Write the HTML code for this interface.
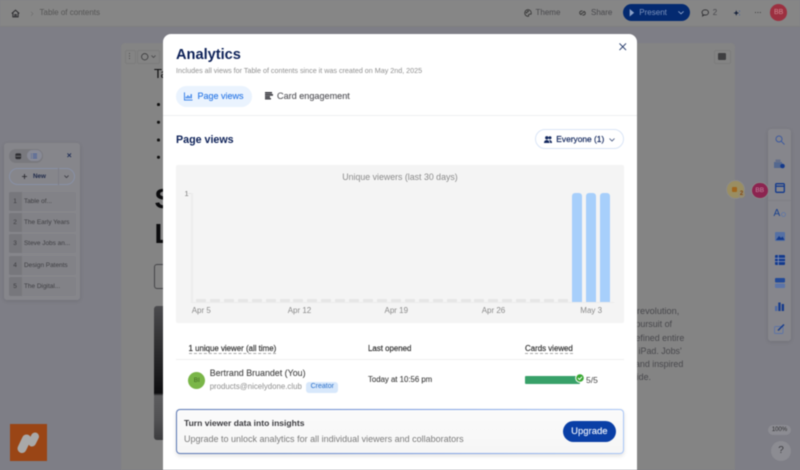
<!DOCTYPE html>
<html>
<head>
<meta charset="utf-8">
<style>
html,body{margin:0;padding:0;width:800px;height:470px;overflow:hidden;background:#7e7e86;font-family:"Liberation Sans",sans-serif}
#root{position:relative;width:800px;height:470px;overflow:hidden;filter:blur(.4px)}
#root div{position:absolute;white-space:nowrap}
.t{line-height:1}
svg{position:absolute;overflow:visible}
.row{left:4.300px;width:67.700px;height:19px;background:#828287;border-radius:2px}
.num{left:0;top:0;width:13px;height:19px;background:#77777c;color:#3c3c40;font-size:6.500px;line-height:19px;text-align:center;border-radius:2px 0 0 2px}
.lbl{left:15.400px;top:0;line-height:19px;font-size:6.450px;color:#3e3e42}
.ph{top:299px;width:10px;height:3px;background:#e6e6e6;border-radius:1px 1px 0 0}
.bar{top:193px;width:10px;height:109px;background:#a7cffb;border-radius:3px 3px 0 0}
.ax{color:#8a8a8a;font-size:8px;line-height:1;top:307px}
.dl{color:#48484c;font-size:8.900px;line-height:1}
</style>
</head>
<body>
<div id="root">
<!-- header -->
<div style="left:0;top:0;width:800px;height:26px;background:#868686;border-bottom:.5px solid #808080"></div>
<svg style="left:10.800px;top:8.500px" width="9" height="9" viewBox="0 0 12 12" fill="none" stroke="#2a2a2e" stroke-width="1.300"><path d="M1 6 6 1.500 11 6M2.500 5v5.500h7V5M5 10.500V7.500h2v3"/></svg>
<svg style="left:30px;top:10.500px" width="4" height="5.500" viewBox="0 0 6 8" fill="none" stroke="#707070" stroke-width="1"><path d="M1.500 1 4.500 4 1.500 7"/></svg>
<div class="t" style="left:39.500px;top:9px;font-size:8px;color:#555">Table of contents</div>

<svg style="left:523.500px;top:8.700px" width="8" height="8" viewBox="0 0 11 11" fill="none" stroke="#333" stroke-width="1.200"><path d="M5.500 1a4.500 4.500 0 1 0 0 9c1.200 0 1-1 .8-1.600-.2-.8.400-1.200 1.200-1.200h1.300c.8 0 1.200-.6 1.200-1.400C10 2.700 8 1 5.500 1z"/><circle cx="3.500" cy="5" r=".6"/><circle cx="5.500" cy="3.300" r=".6"/></svg>
<div class="t" style="left:535.500px;top:9px;font-size:8px;color:#48484c">Theme</div>
<svg style="left:577.700px;top:8.700px" width="9" height="8" viewBox="0 0 12 11" fill="none" stroke="#333" stroke-width="1.200"><path d="M5 7.500H3.500a2.500 2.500 0 0 1 0-4.500L6 2.500M7 3.500h1.500a2.500 2.500 0 0 1 0 4.500L6 8.500M4 6.500 8 4.500"/></svg>
<div class="t" style="left:591px;top:9px;font-size:8px;color:#48484c">Share</div>
<div style="left:622.700px;top:4px;width:67.500px;height:17.300px;border-radius:9px;background:#042a70"></div>
<svg style="left:629.300px;top:8.700px" width="5.500" height="7.500" viewBox="0 0 8 8" preserveAspectRatio="none"><path d="M1 0 7.500 4 1 8z" fill="#8da3c9"/></svg>
<div class="t" style="left:639.300px;top:9px;font-size:8px;color:#7d93bd">Present</div>
<svg style="left:678.300px;top:11.300px" width="6" height="3.500" viewBox="0 0 8 5" preserveAspectRatio="none" fill="none" stroke="#9cb0d2" stroke-width="1.100"><path d="M.5.500 4 4 7.500.5"/></svg>
<svg style="left:701px;top:8.800px" width="8.500" height="8" viewBox="0 0 10 10" fill="none" stroke="#2a2a2e" stroke-width="1.100"><path d="M5 1c2.400 0 4 1.500 4 3.300S7.400 7.600 5 7.600c-.5 0-1 0-1.400-.2L1.700 8.700l.3-2C1.300 6 1 5.200 1 4.300 1 2.500 2.600 1 5 1z"/></svg>
<div class="t" style="left:712.700px;top:9px;font-size:8px;color:#48484c">2</div>
<svg style="left:732.700px;top:8.800px" width="8" height="8" viewBox="0 0 11 11"><path d="M4.500 1.500 5.600 4.400 8.500 5.500 5.600 6.600 4.500 9.500 3.400 6.600.5 5.500 3.400 4.400z" fill="#14203a"/><circle cx="9" cy="3" r=".8" fill="#3a5a9a"/><circle cx="9" cy="8" r=".7" fill="#3a5a9a"/></svg>
<div style="left:754.500px;top:11.800px;width:1.500px;height:1.500px;border-radius:50%;background:#2a2a2e;box-shadow:2.400px 0 #2a2a2e,4.800px 0 #2a2a2e"></div>
<div class="t" style="left:770px;top:4.300px;width:17.300px;height:17px;border-radius:50%;background:#9c3040;color:#d08a92;font-size:7px;line-height:17px;text-align:center">BB</div>

<!-- doc card -->
<div style="left:121px;top:43px;width:614px;height:427px;background:#848484;border-radius:4px 4px 0 0"></div>
<div style="left:125px;top:50px;width:9px;height:12px;border:.5px solid #7c7c7c;border-radius:2px"></div>
<div style="left:129.200px;top:53px;width:1.200px;height:1.200px;border-radius:50%;background:#3e3e40;box-shadow:0 2.500px #3e3e40,0 5px #3e3e40"></div>
<div style="left:137.300px;top:50px;width:20.500px;height:12px;border:.5px solid #7c7c7c;border-radius:2px"></div>
<svg style="left:140.500px;top:52.500px" width="7.500" height="7.500" viewBox="0 0 8 8" fill="none" stroke="#3a3a3c" stroke-width=".9"><circle cx="4" cy="4" r="3.400"/></svg>
<svg style="left:151px;top:55px" width="5" height="3" viewBox="0 0 5 3" fill="none" stroke="#3a3a3c" stroke-width=".7"><path d="M.5.500 2.500 2.500 4.500.5"/></svg>
<div class="t" style="left:154px;top:67px;font-size:13px;color:#0e0e10">Ta</div>
<div style="left:157px;top:103px;width:2.600px;height:2.600px;border-radius:50%;background:#111;box-shadow:0 17.700px #111,0 35.500px #111,0 52.700px #111"></div>
<div class="t" style="left:154.500px;top:184.500px;font-size:28px;font-weight:bold;color:#0c0c0e">S</div>
<div class="t" style="left:154.500px;top:220.300px;font-size:28px;font-weight:bold;color:#0c0c0e">L</div>
<div style="left:154px;top:264px;width:20px;height:23px;border:.7px solid #454548;border-radius:3px"></div>
<div style="left:154px;top:306px;width:20px;height:134px;border-radius:3px;background:linear-gradient(180deg,#4b4b4e 0,#333335 25%,#1d1d1f 50%,#0d0d0f 65%,#5c5c5e 67%,#515153 85%,#3c3c3e 100%)"></div>
<div style="left:714px;top:50px;width:15px;height:12px;border:.5px solid #7c7c7c;border-radius:2px"></div>
<div style="left:718.300px;top:52.700px;width:7.300px;height:7px;background:#3e3e40;border-radius:1px"></div>
<div class="dl" style="right:120.700px;top:307px;font-size:9.200px">revolution,</div>
<div class="dl" style="right:128px;top:320px">pursuit of</div>
<div class="dl" style="right:115.700px;top:333.500px">defined entire</div>
<div class="dl" style="right:118.300px;top:346.500px">and iPad. Jobs'</div>
<div class="dl" style="right:116.700px;top:359.700px">and inspired</div>
<div class="dl" style="right:149px;top:373px">wide.</div>

<!-- left panel -->
<div style="left:4.300px;top:143px;width:75.700px;height:157px;background:#86868b;border-radius:3px;box-shadow:0 1px 4px rgba(0,0,0,.12)">
  <div style="left:4.700px;top:6px;width:33.700px;height:13.700px;background:#79797e;border-radius:7px"></div>
  <svg style="left:10.700px;top:9.700px" width="6.500" height="6.500" viewBox="0 0 8 8"><rect x=".5" y=".5" width="7" height="7" rx="1.500" fill="#2f2f33"/><path d="M1 4h6" stroke="#8a8a8e" stroke-width=".8"/></svg>
  <div style="left:22.400px;top:7px;width:15px;height:11px;background:#888a96;border-radius:6px"></div>
  <svg style="left:26.400px;top:10px" width="6" height="6" viewBox="0 0 8 8" stroke="#2f4f9a" stroke-width="1"><path d="M2.500 1.500H8M2.500 4H8M2.500 6.500H8M0 1.500h1M0 4h1M0 6.500h1"/></svg>
  <svg style="left:62.400px;top:9.500px" width="4.500" height="4.500" viewBox="0 0 5 5" stroke="#1d2c55" stroke-width="1"><path d="M.5.500l4 4M4.500.500l-4 4"/></svg>
  <div style="left:5px;top:25.300px;width:65.400px;height:16.500px;box-sizing:border-box;border:.5px solid #8890a6;border-radius:8.500px"></div>
  <div style="left:53.700px;top:25.300px;width:.5px;height:16.500px;background:#7c7c84"></div>
  <svg style="left:18px;top:31px" width="5" height="5" viewBox="0 0 7 7" stroke="#24242a" stroke-width="1.100"><path d="M3.500 0v7M0 3.500h7"/></svg>
  <div class="t" style="left:28.700px;top:30.500px;font-size:6.300px;font-weight:bold;color:#1f2a4a">New</div>
  <svg style="left:59.700px;top:32px" width="5" height="3.500" viewBox="0 0 6 4" fill="none" stroke="#303038" stroke-width=".9"><path d="M.5.500 3 3 5.500.5"/></svg>
  <div class="row" style="top:49px"><div class="num">1</div><div class="lbl">Table of...</div></div>
  <div class="row" style="top:70.200px"><div class="num">2</div><div class="lbl">The Early Years</div></div>
  <div class="row" style="top:91.400px"><div class="num">3</div><div class="lbl">Steve Jobs an...</div></div>
  <div class="row" style="top:112.600px"><div class="num">4</div><div class="lbl">Design Patents</div></div>
  <div class="row" style="top:133.800px"><div class="num">5</div><div class="lbl">The Digital...</div></div>
</div>

<!-- logo -->
<div style="left:9.500px;top:423.500px;width:37px;height:37px;background:#9a4515"></div>
<svg style="left:17px;top:431px" width="23" height="23" viewBox="0 0 23 23" fill="none" stroke="#a9a9a9" stroke-linecap="round"><path d="M5 17.500 9.500 8" stroke-width="9"/><path d="M15 11.500 18 5.500" stroke-width="8"/></svg>

<!-- right toolbar -->
<div style="left:767.700px;top:129px;width:23.300px;height:211.700px;background:#86868c;border-radius:3px;box-shadow:0 1px 4px rgba(0,0,0,.12)"></div>
<div style="left:767.700px;top:200px;width:23.300px;height:.7px;background:#808086"></div>
<svg style="left:774.500px;top:135px" width="10" height="10" viewBox="0 0 10 10" fill="none" stroke="#3d5a9f" stroke-width="1"><circle cx="4" cy="4" r="3"/><path d="M6.300 6.300 9.500 9.500"/></svg>
<svg style="left:774px;top:159px" width="11" height="10" viewBox="0 0 11 10"><rect x="0" y="3" width="8" height="6" fill="#54688f"/><rect x="1.500" y="0.500" width="5" height="3" fill="#646f8a"/><circle cx="8.500" cy="7" r="2.300" fill="#143a8c"/></svg>
<svg style="left:774.500px;top:182.500px" width="10" height="10" viewBox="0 0 10 10" fill="none" stroke="#143a8c" stroke-width="1.300"><rect x=".7" y=".7" width="8.600" height="8.600" rx="1"/><path d="M.7 3.200H9.300"/></svg>
<div class="t" style="left:773.500px;top:209px;font-size:10px;color:#18408e">A</div>
<svg style="left:780.500px;top:210.500px" width="5" height="7" viewBox="0 0 5 7" fill="none" stroke="#5d76a8" stroke-width=".8"><circle cx="2.500" cy="3.500" r="2"/></svg>
<svg style="left:774.500px;top:232px" width="10" height="9" viewBox="0 0 10 9"><rect width="10" height="9" rx="1" fill="#5570a4"/><path d="M1 8 4 4 6 6 7.500 4.500 9.500 8z" fill="#143a8c"/></svg>
<svg style="left:774.500px;top:255px" width="10" height="10" viewBox="0 0 10 10"><rect width="10" height="10" rx="1" fill="#143a8c"/><path d="M0 3.300h10M0 6.600h10M3.300 0v10" stroke="#8a96b5" stroke-width=".8"/></svg>
<svg style="left:774.500px;top:278px" width="10" height="10" viewBox="0 0 10 10"><rect width="10" height="4.500" rx="1" fill="#234a98"/><rect y="5.500" width="10" height="4.500" rx="1" fill="#5c74a8"/></svg>
<svg style="left:775px;top:302px" width="9" height="9" viewBox="0 0 9 9"><rect y="4" width="2.300" height="5" fill="#4f6aa4"/><rect x="3.300" y="0.500" width="2.300" height="8.500" fill="#143a8c"/><rect x="6.700" y="2" width="2.300" height="7" fill="#143a8c"/></svg>
<svg style="left:774px;top:324px" width="11" height="10" viewBox="0 0 11 10" fill="none"><rect x=".5" y="2.500" width="8.500" height="7" rx="1" stroke="#5c74a8" stroke-width=".9"/><path d="M4 6.500 10 .5" stroke="#143a8c" stroke-width="1.400"/></svg>

<!-- avatars on right -->
<div style="left:726px;top:180px;width:19px;height:19px;border-radius:50%;background:#9a8e62;border:.6px solid #8a8a8b;box-sizing:border-box"></div>
<div style="left:731.500px;top:186.500px;width:5px;height:5px;background:#a0661e;border-radius:1px"></div>
<div style="left:738px;top:191px;width:7px;height:7px;border-radius:50%;background:#958c70;color:#84460e;font-size:6px;line-height:7px;font-weight:bold;text-align:center">2</div>
<div class="t" style="left:751px;top:181.500px;width:15.500px;height:15.500px;border-radius:50%;background:#8c2450;border:.5px solid #888;color:#c48aa2;font-size:6.500px;line-height:15.500px;text-align:center">BB</div>
<div class="t" style="left:768.300px;top:425px;width:22.400px;height:10px;border-radius:6px;background:#8c8c92;color:#2e2e30;font-size:6px;line-height:10px;text-align:center">100%</div>
<div class="t" style="left:771px;top:441px;width:20px;height:20px;border-radius:50%;background:#8c8c92;color:#3c3c40;font-size:10px;line-height:20px;text-align:center">?</div>

<!-- modal -->
<div style="left:163px;top:34px;width:474px;height:436px;background:#fff;border-radius:8px 8px 0 0"></div>
<div class="t" style="left:176px;top:48px;font-size:14.600px;font-weight:bold;color:#0d2158">Analytics</div>
<svg style="left:618.500px;top:43px" width="7.500" height="7.500" viewBox="0 0 8 8" stroke="#1f3567" stroke-width="1"><path d="M.5.500l7 7M7.500.5l-7 7"/></svg>
<div class="t" style="left:176px;top:68.200px;font-size:7.170px;color:#8f8f8f">Includes all views for Table of contents since it was created on May 2nd, 2025</div>

<div style="left:175.700px;top:85.700px;width:76px;height:21px;border-radius:11px;background:#eaf3fe"></div>
<svg style="left:184.300px;top:92px" width="9" height="8.500" viewBox="0 0 10 10" preserveAspectRatio="none" fill="none" stroke="#2b78e6" stroke-width="1"><path d="M.5.500v9h9"/><path d="M2.500 7.500V5.500M4.300 7.500V4M6.100 7.500V5M8 7.500V2.500" stroke-width="1.300"/></svg>
<div class="t" style="left:197.500px;top:91.500px;font-size:9px;color:#2b78e6;-webkit-text-stroke:.12px #2b78e6">Page views</div>
<svg style="left:265px;top:92.300px" width="8" height="7.500" viewBox="0 0 8 8" preserveAspectRatio="none"><rect width="7" height="1.800" fill="#3e3e44"/><rect y="2.200" width="8" height="1.800" fill="#3e3e44"/><rect y="4.400" width="5" height="1.800" fill="#3e3e44"/><rect y="6.500" width="6" height="1.500" fill="#3e3e44"/></svg>
<div class="t" style="left:277px;top:91.500px;font-size:9.100px;color:#55555a;-webkit-text-stroke:.12px #55555a">Card engagement</div>
<div style="left:163px;top:115px;width:474px;height:.7px;background:#eeeff2"></div>

<div class="t" style="left:176px;top:135px;font-size:10.700px;font-weight:bold;color:#0d2158">Page views</div>
<div style="left:535px;top:128.500px;width:89px;height:20.500px;box-sizing:border-box;border:.7px solid #dbe6f7;border-radius:11px"></div>
<svg style="left:544px;top:136px" width="8" height="7" viewBox="0 0 8 7"><circle cx="2.800" cy="1.800" r="1.700" fill="#14295f"/><circle cx="6" cy="1.800" r="1.500" fill="#14295f"/><path d="M0 7c0-4 5.500-4 5.500 0zM6 7h2c0-2.500-1.500-3-3-3 1 1 1 2 1 3z" fill="#14295f"/></svg>
<div class="t" style="left:556.300px;top:135px;font-size:8.400px;color:#14295f;-webkit-text-stroke:.2px #14295f">Everyone (1)</div>
<svg style="left:609px;top:137.500px" width="6" height="4" viewBox="0 0 6 4" fill="none" stroke="#3a4c78" stroke-width=".8"><path d="M.5.500 3 3 5.500.5"/></svg>

<!-- chart -->
<div style="left:176px;top:165px;width:448px;height:158px;background:#f4f4f4;border-radius:2px"></div>
<div class="t" style="left:176px;top:172.500px;width:448px;text-align:center;font-size:8.800px;color:#8a8a8a">Unique viewers (last 30 days)</div>
<div class="t" style="left:184.500px;top:189.500px;font-size:7.500px;color:#777">1</div>
<div style="left:191px;top:193px;width:2px;height:110px;background:#ececec"></div>
<div style="left:188px;top:193px;width:3px;height:.7px;background:#e4e4e4"></div>
<div style="left:191px;top:302px;width:423px;height:1px;background:#ececec"></div>

<div class="ph" style="left:196px"></div><div class="ph" style="left:209.900px"></div><div class="ph" style="left:223.800px"></div><div class="ph" style="left:237.800px"></div><div class="ph" style="left:251.700px"></div><div class="ph" style="left:265.600px"></div><div class="ph" style="left:279.500px"></div><div class="ph" style="left:293.400px"></div><div class="ph" style="left:307.400px"></div><div class="ph" style="left:321.300px"></div><div class="ph" style="left:335.200px"></div><div class="ph" style="left:349.100px"></div><div class="ph" style="left:363px"></div><div class="ph" style="left:377px"></div><div class="ph" style="left:390.900px"></div><div class="ph" style="left:404.800px"></div><div class="ph" style="left:418.700px"></div><div class="ph" style="left:432.600px"></div><div class="ph" style="left:446.600px"></div><div class="ph" style="left:460.500px"></div><div class="ph" style="left:474.400px"></div><div class="ph" style="left:488.300px"></div><div class="ph" style="left:502.200px"></div><div class="ph" style="left:516.200px"></div><div class="ph" style="left:530.100px"></div><div class="ph" style="left:544px"></div><div class="ph" style="left:558px"></div>
<div class="bar" style="left:572px"></div><div class="bar" style="left:586px"></div><div class="bar" style="left:600px"></div>

<div class="ax" style="left:191.700px">Apr 5</div>
<div class="ax" style="left:287.700px">Apr 12</div>
<div class="ax" style="left:384.500px">Apr 19</div>
<div class="ax" style="left:481.700px">Apr 26</div>
<div class="ax" style="left:580.300px">May 3</div>

<!-- table -->
<div class="t" style="left:188.500px;top:344.500px;font-size:7.900px;color:#333;-webkit-text-stroke:.18px #333;border-bottom:.7px dashed #aaa;padding-bottom:1px">1 unique viewer (all time)</div>
<div class="t" style="left:368px;top:344.500px;font-size:7.900px;color:#333;-webkit-text-stroke:.18px #333">Last opened</div>
<div class="t" style="left:525px;top:344.500px;font-size:7.900px;color:#333;-webkit-text-stroke:.18px #333;border-bottom:.7px dashed #aaa;padding-bottom:1px">Cards viewed</div>
<div style="left:176px;top:359px;width:448px;height:.7px;background:#f0f0f0"></div>
<div class="t" style="left:188.300px;top:371.500px;width:17px;height:17px;border-radius:50%;background:#7ab648;color:#3f6a22;font-size:6.500px;line-height:17px;text-align:center">BI</div>
<div class="t" style="left:209.700px;top:368.500px;font-size:8.900px;color:#444;-webkit-text-stroke:.1px #444">Bertrand Bruandet (You)</div>
<div class="t" style="left:209.700px;top:383px;font-size:7.850px;color:#8e8e8e">products@nicelydone.club</div>
<div class="t" style="left:306.300px;top:382.300px;width:32px;height:10.700px;border-radius:3px;background:#d8e8fb;color:#2a6fc9;font-size:7px;line-height:10.700px;text-align:center">Creator</div>
<div class="t" style="left:368px;top:376px;font-size:7.800px;color:#3c3c3c;-webkit-text-stroke:.1px #3c3c3c">Today at 10:56 pm</div>
<div style="left:524.700px;top:375.700px;width:55.300px;height:8.300px;background:#38a169;border-radius:1px"></div>
<svg style="left:575px;top:372.500px" width="10" height="10" viewBox="0 0 10 10"><circle cx="5" cy="5" r="4.800" fill="#fff"/><circle cx="5" cy="5" r="3.800" fill="#38a832"/><path d="M3 5 4.500 6.500 7 3.800" fill="none" stroke="#fff" stroke-width="1"/></svg>
<div class="t" style="left:586px;top:376px;font-size:8.500px;color:#444">5/5</div>

<!-- upgrade box -->
<div style="left:176px;top:409.300px;width:448px;height:44.700px;box-sizing:border-box;border:1px solid transparent;border-radius:4px;background:linear-gradient(#fbfbfb,#f6f6f6) padding-box,linear-gradient(90deg,#5a77b4 0,#7a9be0 50%,#a9c6f6 100%) border-box;box-shadow:0 2px 4px rgba(0,0,0,.12)"></div>
<div class="t" style="left:184px;top:419px;font-size:8.550px;font-weight:bold;color:#3a3a3e">Turn viewer data into insights</div>
<div class="t" style="left:184px;top:435px;font-size:9px;color:#7a7a7a">Upgrade to unlock analytics for all individual viewers and collaborators</div>
<div class="t" style="left:562.700px;top:421px;width:53.300px;height:21px;border-radius:11px;background:#0a3fa6;color:#e8eefa;font-size:9.500px;line-height:21px;text-align:center;-webkit-text-stroke:.15px #e8eefa">Upgrade</div>
</div>
</body>
</html>
